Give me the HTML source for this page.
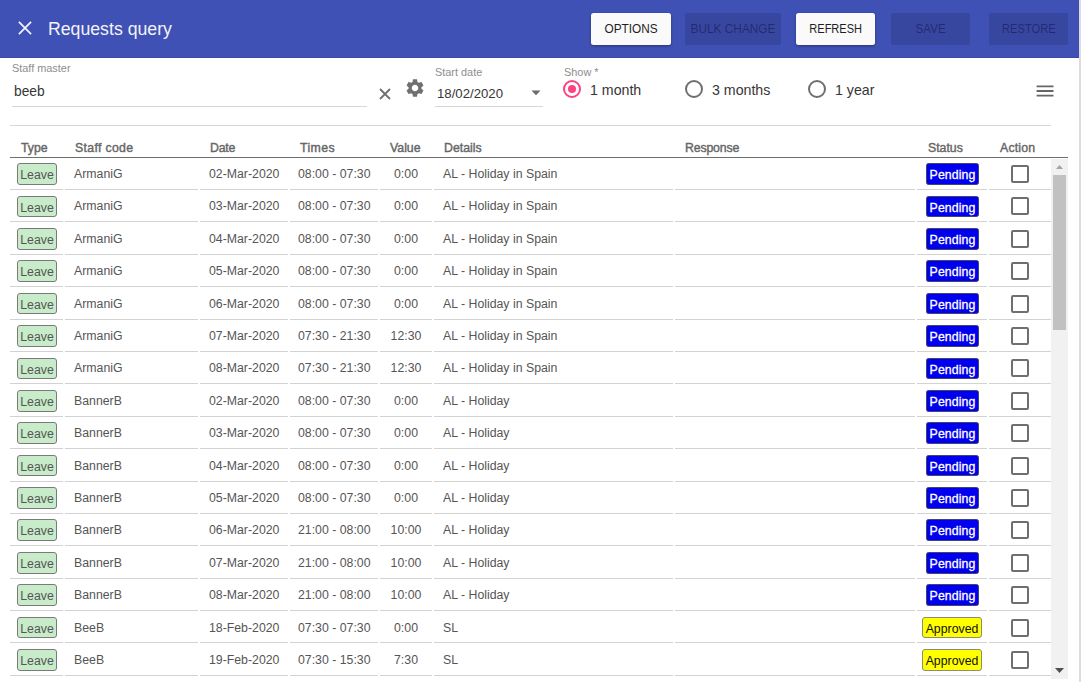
<!DOCTYPE html>
<html><head><meta charset="utf-8">
<style>
*{margin:0;padding:0;box-sizing:border-box}
html,body{width:1081px;height:682px;overflow:hidden;background:#fff;font-family:"Liberation Sans",sans-serif;color:#333}
.abs{position:absolute}
#hdr{position:absolute;left:0;top:0;width:1079px;height:58px;background:#3F51B5;border-bottom:1px solid #3848ad}
#rb{position:absolute;left:1079px;top:0;width:2px;height:682px;background:#dcdcdc}
.close{position:absolute;left:17.6px;top:20.8px;width:14px;height:14px}
.title{position:absolute;left:48px;top:17px;font-size:17.7px;color:#f3f3f8;white-space:nowrap;line-height:24px}
.btn{position:absolute;top:13px;height:32px;border-radius:2.5px;font-size:12px;line-height:33px;text-align:center;white-space:nowrap}
.btn span{display:inline-block}
.btn.on{background:#fafafa;color:#1e1e1e;box-shadow:0 1px 3px rgba(0,0,0,.35)}
.btn.off{background:rgba(0,0,0,.12);color:rgba(10,0,50,.42);border-radius:2px}
.lbl{position:absolute;font-size:10.9px;color:#8e8e8e;white-space:nowrap;line-height:12px}
.val{position:absolute;font-size:14.2px;color:#363636;white-space:nowrap;line-height:16px}
.uline{position:absolute;height:1px;background:#d8d8d8}
.radio{position:absolute;width:18px;height:18px;border-radius:50%;border:2px solid #6f6f6f}
.radio.sel{border-color:#FF4081}
.radio.sel::after{content:"";position:absolute;left:3px;top:3px;width:8px;height:8px;border-radius:50%;background:#FF4081}
.th{position:absolute;top:141px;font-size:12.3px;-webkit-text-stroke:0.4px #666;color:#666;white-space:nowrap;line-height:14px}
#thline{position:absolute;left:10px;top:156.8px;width:1058px;height:1.4px;background:#6e6e6e}
.row{position:absolute;left:0;width:1081px;height:32.39px}
.t{position:absolute;top:9px;font-size:12.3px;color:#555;white-space:nowrap;line-height:15px}
.t.c{text-align:center}
.sep{position:absolute;height:1px;background:#d2d2d2}
.badge{position:absolute;top:5.6px;height:21.7px;border-radius:4px;font-size:12.3px;line-height:22.2px;text-align:center;white-space:nowrap}
.leave{width:40px;background:#c8ecca;border:1px solid #7a7a7a;color:#555;border-radius:3px}
.pend{left:926px;width:53px;background:#0000ee;border:1px solid #45456a;color:#fff;border-radius:2.5px;-webkit-text-stroke:0.3px #fff;letter-spacing:0.1px}
.appr{left:922px;width:60px;background:#ffff00;border:1px solid #8c8c70;color:#111;border-radius:3px}
.cb{position:absolute;left:1011px;top:7.5px;width:18px;height:18px;border:2px solid #6f6f6f;border-radius:2px}
#sb{position:absolute;left:1051px;top:158.5px;width:17px;height:520px;background:#f1f1f1}
#thumb{position:absolute;left:2px;top:16.5px;width:13px;height:155px;background:#c1c1c1}
</style></head><body>
<div id="hdr">
 <svg class="close" viewBox="0 0 14 14"><path d="M0.9 0.9L13.1 13.1M13.1 0.9L0.9 13.1" stroke="#f2f2f8" stroke-width="1.75"/></svg>
 <div class="title">Requests query</div>
 <div class="btn on" style="left:591px;width:80px"><span style="transform:scaleX(.983)">OPTIONS</span></div>
 <div class="btn off" style="left:685px;width:96px"><span style="transform:scaleX(.986)">BULK CHANGE</span></div>
 <div class="btn on" style="left:796px;width:79px"><span style="transform:scaleX(.92)">REFRESH</span></div>
 <div class="btn off" style="left:891px;width:79px"><span style="transform:scaleX(.97)">SAVE</span></div>
 <div class="btn off" style="left:989px;width:79px"><span style="transform:scaleX(.93)">RESTORE</span></div>
</div>
<div id="rb"></div>
<div class="lbl" style="left:12px;top:62.4px">Staff master</div>
<div class="val" style="left:14px;top:84px;font-size:13.8px">beeb</div>
<div class="uline" style="left:12px;top:106px;width:355px"></div>
<svg class="abs" style="left:379px;top:88px" width="12" height="12" viewBox="0 0 12 12"><path d="M1 1L11 11M11 1L1 11" stroke="#707070" stroke-width="1.8"/></svg>
<svg class="abs" style="left:406px;top:79px" width="18" height="18" viewBox="2 2 20 20"><path fill="#707070" d="M19.14 12.94c.04-.3.06-.61.06-.94 0-.32-.02-.64-.07-.94l2.03-1.58c.18-.14.23-.41.12-.61l-1.92-3.32c-.12-.22-.37-.29-.59-.22l-2.39.96c-.5-.38-1.03-.7-1.62-.94l-.36-2.54c-.04-.24-.24-.41-.48-.41h-3.84c-.24 0-.43.17-.47.41l-.36 2.54c-.59.24-1.13.57-1.62.94l-2.39-.96c-.22-.08-.47 0-.59.22L2.74 8.87c-.12.21-.08.47.12.61l2.03 1.58c-.05.3-.09.63-.09.94s.02.64.07.94l-2.03 1.58c-.18.14-.23.41-.12.61l1.92 3.32c.12.22.37.29.59.22l2.39-.96c.5.38 1.030.7 1.62.94l.36 2.54c.05.24.24.41.48.41h3.84c.24 0 .44-.17.47-.41l.36-2.54c.59-.24 1.13-.56 1.62-.94l2.39.96c.22.08.47 0 .59-.22l1.92-3.32c.12-.22.07-.47-.12-.61l-2.01-1.58zM12 15.6c-1.98 0-3.6-1.62-3.6-3.6s1.62-3.6 3.6-3.6 3.6 1.62 3.6 3.6-1.62 3.6-3.6 3.6z"/></svg>
<div class="lbl" style="left:435px;top:66.3px">Start date</div>
<div class="val" style="left:437px;top:85.6px;font-size:13.2px">18/02/2020</div>
<svg class="abs" style="left:531px;top:90px" width="10" height="6" viewBox="0 0 10 6"><path d="M0.5 0.5h9L5 5.2z" fill="#6a6a6a"/></svg>
<div class="uline" style="left:435px;top:106px;width:108px"></div>
<div class="lbl" style="left:564px;top:66px">Show *</div>
<div class="radio sel" style="left:563px;top:79.6px"></div>
<div class="val" style="left:590px;top:82px">1 month</div>
<div class="radio" style="left:685px;top:79.6px"></div>
<div class="val" style="left:712px;top:82px">3 months</div>
<div class="radio" style="left:808px;top:79.6px"></div>
<div class="val" style="left:835px;top:82px">1 year</div>
<svg class="abs" style="left:1036px;top:84px" width="18" height="14" viewBox="0 0 18 14"><path d="M0.6 2.4h16.9M0.6 7h16.9M0.6 11.6h16.9" stroke="#666" stroke-width="1.8"/></svg>
<div class="uline" style="left:10px;top:125px;width:1041px"></div>
<div class="th" style="left:21px">Type</div>
<div class="th" style="left:75px;letter-spacing:0.33px">Staff code</div>
<div class="th" style="left:210px;letter-spacing:-0.2px">Date</div>
<div class="th" style="left:300px;letter-spacing:0.4px">Times</div>
<div class="th" style="left:390px">Value</div>
<div class="th" style="left:444px">Details</div>
<div class="th" style="left:685px;letter-spacing:-0.15px">Response</div>
<div class="th" style="left:928px">Status</div>
<div class="th" style="left:1000px;letter-spacing:0.2px">Action</div>
<div id="thline"></div>
<div class="row" style="top:157.60px"><div class="badge leave" style="left:17px">Leave</div><div class="badge pend">Pending</div><div class="cb"></div></div><div class="row" style="top:158px"><span class="t" style="left:74px">ArmaniG</span><span class="t" style="left:209px">02-Mar-2020</span><span class="t" style="left:298px">08:00 - 07:30</span><span class="t c" style="left:379px;width:54px">0:00</span><span class="t" style="left:443px">AL - Holiday in Spain</span></div><i class="sep" style="top:189px;left:10px;width:52.5px"></i><i class="sep" style="top:189px;left:64.5px;width:133.0px"></i><i class="sep" style="top:189px;left:199.5px;width:88.5px"></i><i class="sep" style="top:189px;left:290px;width:88px"></i><i class="sep" style="top:189px;left:380px;width:52px"></i><i class="sep" style="top:189px;left:434px;width:239px"></i><i class="sep" style="top:189px;left:675px;width:240px"></i><i class="sep" style="top:189px;left:917px;width:70px"></i><i class="sep" style="top:189px;left:989px;width:61.5px"></i>
<div class="row" style="top:189.99px"><div class="badge leave" style="left:17px">Leave</div><div class="badge pend">Pending</div><div class="cb"></div></div><div class="row" style="top:190px"><span class="t" style="left:74px">ArmaniG</span><span class="t" style="left:209px">03-Mar-2020</span><span class="t" style="left:298px">08:00 - 07:30</span><span class="t c" style="left:379px;width:54px">0:00</span><span class="t" style="left:443px">AL - Holiday in Spain</span></div><i class="sep" style="top:221px;left:10px;width:52.5px"></i><i class="sep" style="top:221px;left:64.5px;width:133.0px"></i><i class="sep" style="top:221px;left:199.5px;width:88.5px"></i><i class="sep" style="top:221px;left:290px;width:88px"></i><i class="sep" style="top:221px;left:380px;width:52px"></i><i class="sep" style="top:221px;left:434px;width:239px"></i><i class="sep" style="top:221px;left:675px;width:240px"></i><i class="sep" style="top:221px;left:917px;width:70px"></i><i class="sep" style="top:221px;left:989px;width:61.5px"></i>
<div class="row" style="top:222.38px"><div class="badge leave" style="left:17px">Leave</div><div class="badge pend">Pending</div><div class="cb"></div></div><div class="row" style="top:223px"><span class="t" style="left:74px">ArmaniG</span><span class="t" style="left:209px">04-Mar-2020</span><span class="t" style="left:298px">08:00 - 07:30</span><span class="t c" style="left:379px;width:54px">0:00</span><span class="t" style="left:443px">AL - Holiday in Spain</span></div><i class="sep" style="top:254px;left:10px;width:52.5px"></i><i class="sep" style="top:254px;left:64.5px;width:133.0px"></i><i class="sep" style="top:254px;left:199.5px;width:88.5px"></i><i class="sep" style="top:254px;left:290px;width:88px"></i><i class="sep" style="top:254px;left:380px;width:52px"></i><i class="sep" style="top:254px;left:434px;width:239px"></i><i class="sep" style="top:254px;left:675px;width:240px"></i><i class="sep" style="top:254px;left:917px;width:70px"></i><i class="sep" style="top:254px;left:989px;width:61.5px"></i>
<div class="row" style="top:254.77px"><div class="badge leave" style="left:17px">Leave</div><div class="badge pend">Pending</div><div class="cb"></div></div><div class="row" style="top:255px"><span class="t" style="left:74px">ArmaniG</span><span class="t" style="left:209px">05-Mar-2020</span><span class="t" style="left:298px">08:00 - 07:30</span><span class="t c" style="left:379px;width:54px">0:00</span><span class="t" style="left:443px">AL - Holiday in Spain</span></div><i class="sep" style="top:286px;left:10px;width:52.5px"></i><i class="sep" style="top:286px;left:64.5px;width:133.0px"></i><i class="sep" style="top:286px;left:199.5px;width:88.5px"></i><i class="sep" style="top:286px;left:290px;width:88px"></i><i class="sep" style="top:286px;left:380px;width:52px"></i><i class="sep" style="top:286px;left:434px;width:239px"></i><i class="sep" style="top:286px;left:675px;width:240px"></i><i class="sep" style="top:286px;left:917px;width:70px"></i><i class="sep" style="top:286px;left:989px;width:61.5px"></i>
<div class="row" style="top:287.16px"><div class="badge leave" style="left:17px">Leave</div><div class="badge pend">Pending</div><div class="cb"></div></div><div class="row" style="top:288px"><span class="t" style="left:74px">ArmaniG</span><span class="t" style="left:209px">06-Mar-2020</span><span class="t" style="left:298px">08:00 - 07:30</span><span class="t c" style="left:379px;width:54px">0:00</span><span class="t" style="left:443px">AL - Holiday in Spain</span></div><i class="sep" style="top:319px;left:10px;width:52.5px"></i><i class="sep" style="top:319px;left:64.5px;width:133.0px"></i><i class="sep" style="top:319px;left:199.5px;width:88.5px"></i><i class="sep" style="top:319px;left:290px;width:88px"></i><i class="sep" style="top:319px;left:380px;width:52px"></i><i class="sep" style="top:319px;left:434px;width:239px"></i><i class="sep" style="top:319px;left:675px;width:240px"></i><i class="sep" style="top:319px;left:917px;width:70px"></i><i class="sep" style="top:319px;left:989px;width:61.5px"></i>
<div class="row" style="top:319.55px"><div class="badge leave" style="left:17px">Leave</div><div class="badge pend">Pending</div><div class="cb"></div></div><div class="row" style="top:320px"><span class="t" style="left:74px">ArmaniG</span><span class="t" style="left:209px">07-Mar-2020</span><span class="t" style="left:298px">07:30 - 21:30</span><span class="t c" style="left:379px;width:54px">12:30</span><span class="t" style="left:443px">AL - Holiday in Spain</span></div><i class="sep" style="top:351px;left:10px;width:52.5px"></i><i class="sep" style="top:351px;left:64.5px;width:133.0px"></i><i class="sep" style="top:351px;left:199.5px;width:88.5px"></i><i class="sep" style="top:351px;left:290px;width:88px"></i><i class="sep" style="top:351px;left:380px;width:52px"></i><i class="sep" style="top:351px;left:434px;width:239px"></i><i class="sep" style="top:351px;left:675px;width:240px"></i><i class="sep" style="top:351px;left:917px;width:70px"></i><i class="sep" style="top:351px;left:989px;width:61.5px"></i>
<div class="row" style="top:351.94px"><div class="badge leave" style="left:17px">Leave</div><div class="badge pend">Pending</div><div class="cb"></div></div><div class="row" style="top:352px"><span class="t" style="left:74px">ArmaniG</span><span class="t" style="left:209px">08-Mar-2020</span><span class="t" style="left:298px">07:30 - 21:30</span><span class="t c" style="left:379px;width:54px">12:30</span><span class="t" style="left:443px">AL - Holiday in Spain</span></div><i class="sep" style="top:383px;left:10px;width:52.5px"></i><i class="sep" style="top:383px;left:64.5px;width:133.0px"></i><i class="sep" style="top:383px;left:199.5px;width:88.5px"></i><i class="sep" style="top:383px;left:290px;width:88px"></i><i class="sep" style="top:383px;left:380px;width:52px"></i><i class="sep" style="top:383px;left:434px;width:239px"></i><i class="sep" style="top:383px;left:675px;width:240px"></i><i class="sep" style="top:383px;left:917px;width:70px"></i><i class="sep" style="top:383px;left:989px;width:61.5px"></i>
<div class="row" style="top:384.33px"><div class="badge leave" style="left:17px">Leave</div><div class="badge pend">Pending</div><div class="cb"></div></div><div class="row" style="top:385px"><span class="t" style="left:74px">BannerB</span><span class="t" style="left:209px">02-Mar-2020</span><span class="t" style="left:298px">08:00 - 07:30</span><span class="t c" style="left:379px;width:54px">0:00</span><span class="t" style="left:443px">AL - Holiday</span></div><i class="sep" style="top:416px;left:10px;width:52.5px"></i><i class="sep" style="top:416px;left:64.5px;width:133.0px"></i><i class="sep" style="top:416px;left:199.5px;width:88.5px"></i><i class="sep" style="top:416px;left:290px;width:88px"></i><i class="sep" style="top:416px;left:380px;width:52px"></i><i class="sep" style="top:416px;left:434px;width:239px"></i><i class="sep" style="top:416px;left:675px;width:240px"></i><i class="sep" style="top:416px;left:917px;width:70px"></i><i class="sep" style="top:416px;left:989px;width:61.5px"></i>
<div class="row" style="top:416.72px"><div class="badge leave" style="left:17px">Leave</div><div class="badge pend">Pending</div><div class="cb"></div></div><div class="row" style="top:417px"><span class="t" style="left:74px">BannerB</span><span class="t" style="left:209px">03-Mar-2020</span><span class="t" style="left:298px">08:00 - 07:30</span><span class="t c" style="left:379px;width:54px">0:00</span><span class="t" style="left:443px">AL - Holiday</span></div><i class="sep" style="top:448px;left:10px;width:52.5px"></i><i class="sep" style="top:448px;left:64.5px;width:133.0px"></i><i class="sep" style="top:448px;left:199.5px;width:88.5px"></i><i class="sep" style="top:448px;left:290px;width:88px"></i><i class="sep" style="top:448px;left:380px;width:52px"></i><i class="sep" style="top:448px;left:434px;width:239px"></i><i class="sep" style="top:448px;left:675px;width:240px"></i><i class="sep" style="top:448px;left:917px;width:70px"></i><i class="sep" style="top:448px;left:989px;width:61.5px"></i>
<div class="row" style="top:449.11px"><div class="badge leave" style="left:17px">Leave</div><div class="badge pend">Pending</div><div class="cb"></div></div><div class="row" style="top:450px"><span class="t" style="left:74px">BannerB</span><span class="t" style="left:209px">04-Mar-2020</span><span class="t" style="left:298px">08:00 - 07:30</span><span class="t c" style="left:379px;width:54px">0:00</span><span class="t" style="left:443px">AL - Holiday</span></div><i class="sep" style="top:481px;left:10px;width:52.5px"></i><i class="sep" style="top:481px;left:64.5px;width:133.0px"></i><i class="sep" style="top:481px;left:199.5px;width:88.5px"></i><i class="sep" style="top:481px;left:290px;width:88px"></i><i class="sep" style="top:481px;left:380px;width:52px"></i><i class="sep" style="top:481px;left:434px;width:239px"></i><i class="sep" style="top:481px;left:675px;width:240px"></i><i class="sep" style="top:481px;left:917px;width:70px"></i><i class="sep" style="top:481px;left:989px;width:61.5px"></i>
<div class="row" style="top:481.50px"><div class="badge leave" style="left:17px">Leave</div><div class="badge pend">Pending</div><div class="cb"></div></div><div class="row" style="top:482px"><span class="t" style="left:74px">BannerB</span><span class="t" style="left:209px">05-Mar-2020</span><span class="t" style="left:298px">08:00 - 07:30</span><span class="t c" style="left:379px;width:54px">0:00</span><span class="t" style="left:443px">AL - Holiday</span></div><i class="sep" style="top:513px;left:10px;width:52.5px"></i><i class="sep" style="top:513px;left:64.5px;width:133.0px"></i><i class="sep" style="top:513px;left:199.5px;width:88.5px"></i><i class="sep" style="top:513px;left:290px;width:88px"></i><i class="sep" style="top:513px;left:380px;width:52px"></i><i class="sep" style="top:513px;left:434px;width:239px"></i><i class="sep" style="top:513px;left:675px;width:240px"></i><i class="sep" style="top:513px;left:917px;width:70px"></i><i class="sep" style="top:513px;left:989px;width:61.5px"></i>
<div class="row" style="top:513.89px"><div class="badge leave" style="left:17px">Leave</div><div class="badge pend">Pending</div><div class="cb"></div></div><div class="row" style="top:514px"><span class="t" style="left:74px">BannerB</span><span class="t" style="left:209px">06-Mar-2020</span><span class="t" style="left:298px">21:00 - 08:00</span><span class="t c" style="left:379px;width:54px">10:00</span><span class="t" style="left:443px">AL - Holiday</span></div><i class="sep" style="top:545px;left:10px;width:52.5px"></i><i class="sep" style="top:545px;left:64.5px;width:133.0px"></i><i class="sep" style="top:545px;left:199.5px;width:88.5px"></i><i class="sep" style="top:545px;left:290px;width:88px"></i><i class="sep" style="top:545px;left:380px;width:52px"></i><i class="sep" style="top:545px;left:434px;width:239px"></i><i class="sep" style="top:545px;left:675px;width:240px"></i><i class="sep" style="top:545px;left:917px;width:70px"></i><i class="sep" style="top:545px;left:989px;width:61.5px"></i>
<div class="row" style="top:546.28px"><div class="badge leave" style="left:17px">Leave</div><div class="badge pend">Pending</div><div class="cb"></div></div><div class="row" style="top:547px"><span class="t" style="left:74px">BannerB</span><span class="t" style="left:209px">07-Mar-2020</span><span class="t" style="left:298px">21:00 - 08:00</span><span class="t c" style="left:379px;width:54px">10:00</span><span class="t" style="left:443px">AL - Holiday</span></div><i class="sep" style="top:578px;left:10px;width:52.5px"></i><i class="sep" style="top:578px;left:64.5px;width:133.0px"></i><i class="sep" style="top:578px;left:199.5px;width:88.5px"></i><i class="sep" style="top:578px;left:290px;width:88px"></i><i class="sep" style="top:578px;left:380px;width:52px"></i><i class="sep" style="top:578px;left:434px;width:239px"></i><i class="sep" style="top:578px;left:675px;width:240px"></i><i class="sep" style="top:578px;left:917px;width:70px"></i><i class="sep" style="top:578px;left:989px;width:61.5px"></i>
<div class="row" style="top:578.67px"><div class="badge leave" style="left:17px">Leave</div><div class="badge pend">Pending</div><div class="cb"></div></div><div class="row" style="top:579px"><span class="t" style="left:74px">BannerB</span><span class="t" style="left:209px">08-Mar-2020</span><span class="t" style="left:298px">21:00 - 08:00</span><span class="t c" style="left:379px;width:54px">10:00</span><span class="t" style="left:443px">AL - Holiday</span></div><i class="sep" style="top:610px;left:10px;width:52.5px"></i><i class="sep" style="top:610px;left:64.5px;width:133.0px"></i><i class="sep" style="top:610px;left:199.5px;width:88.5px"></i><i class="sep" style="top:610px;left:290px;width:88px"></i><i class="sep" style="top:610px;left:380px;width:52px"></i><i class="sep" style="top:610px;left:434px;width:239px"></i><i class="sep" style="top:610px;left:675px;width:240px"></i><i class="sep" style="top:610px;left:917px;width:70px"></i><i class="sep" style="top:610px;left:989px;width:61.5px"></i>
<div class="row" style="top:611.06px"><div class="badge leave" style="left:17px">Leave</div><div class="badge appr">Approved</div><div class="cb"></div></div><div class="row" style="top:612px"><span class="t" style="left:74px">BeeB</span><span class="t" style="left:209px">18-Feb-2020</span><span class="t" style="left:298px">07:30 - 07:30</span><span class="t c" style="left:379px;width:54px">0:00</span><span class="t" style="left:443px">SL</span></div><i class="sep" style="top:642px;left:10px;width:52.5px"></i><i class="sep" style="top:642px;left:64.5px;width:133.0px"></i><i class="sep" style="top:642px;left:199.5px;width:88.5px"></i><i class="sep" style="top:642px;left:290px;width:88px"></i><i class="sep" style="top:642px;left:380px;width:52px"></i><i class="sep" style="top:642px;left:434px;width:239px"></i><i class="sep" style="top:642px;left:675px;width:240px"></i><i class="sep" style="top:642px;left:917px;width:70px"></i><i class="sep" style="top:642px;left:989px;width:61.5px"></i>
<div class="row" style="top:643.45px"><div class="badge leave" style="left:17px">Leave</div><div class="badge appr">Approved</div><div class="cb"></div></div><div class="row" style="top:644px"><span class="t" style="left:74px">BeeB</span><span class="t" style="left:209px">19-Feb-2020</span><span class="t" style="left:298px">07:30 - 15:30</span><span class="t c" style="left:379px;width:54px">7:30</span><span class="t" style="left:443px">SL</span></div><i class="sep" style="top:675px;left:10px;width:52.5px"></i><i class="sep" style="top:675px;left:64.5px;width:133.0px"></i><i class="sep" style="top:675px;left:199.5px;width:88.5px"></i><i class="sep" style="top:675px;left:290px;width:88px"></i><i class="sep" style="top:675px;left:380px;width:52px"></i><i class="sep" style="top:675px;left:434px;width:239px"></i><i class="sep" style="top:675px;left:675px;width:240px"></i><i class="sep" style="top:675px;left:917px;width:70px"></i><i class="sep" style="top:675px;left:989px;width:61.5px"></i>
<div id="sb"><svg class="abs" style="left:5px;top:6.5px" width="7" height="4" viewBox="0 0 7 4"><path d="M3.5 0L7 4H0z" fill="#a3a3a3"/></svg><div id="thumb"></div>
<svg class="abs" style="left:4px;top:509px" width="9" height="5" viewBox="0 0 9 5"><path d="M0 0h9L4.5 5z" fill="#505050"/></svg></div>
</body></html>
